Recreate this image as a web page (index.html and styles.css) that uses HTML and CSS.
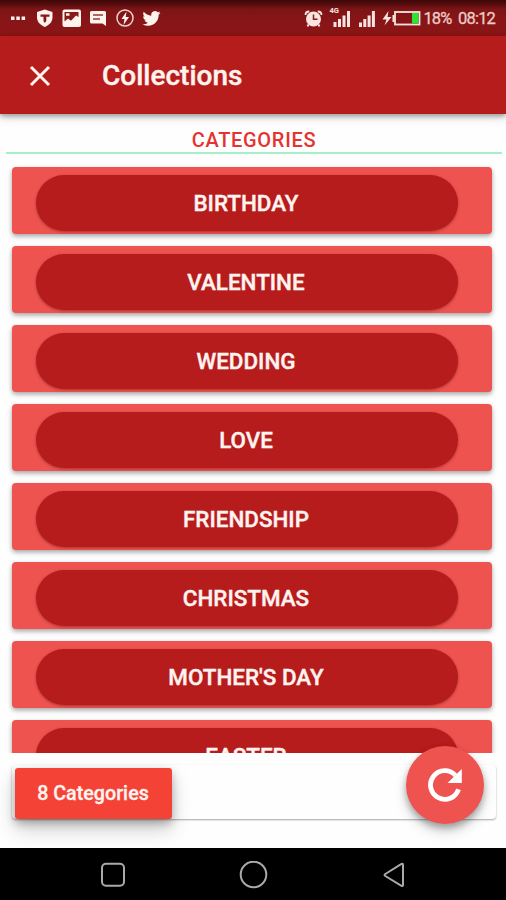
FILE: index.html
```html
<!DOCTYPE html>
<html lang="en">
<head>
<meta charset="utf-8">
<title>Collections</title>
<link rel="stylesheet" href="styles.css">
</head>
<body>
<div class="screen">
  <header class="status">
    <svg class="status-left" width="170" height="36" viewBox="0 0 170 36" fill="#fff3ee">
      <path d="M11 16.500h3.500v3.500H11zM16.300 16.500h3.500v3.500h-3.500zM21.600 16.500h3.500v3.500h-3.500z"/>
      <path d="M44.800 9.500 52.500 12v5.500c0 4.500-3.500 7.500-7.700 9.500-4.300-2-7.800-5-7.800-9.500V12z"/>
      <path d="M40.500 14.500h9v2.300h-3.200V21l-1.500 2-1.300-2v-4.200h-3z" fill="#86191a"/>
      <rect x="62.500" y="9.500" width="18.500" height="17.500" rx="2"/>
      <path d="M64.500 12h14v5l-2.500-1.500-5 5.300-3-2.300-3.500 3zM66 13.300v2.400h3.500v-2.400z" fill="#86191a" fill-rule="evenodd"/>
      <path d="M91.500 11h13q1.500 0 1.500 1.500V26l-3.500-2.500h-11q-1.500 0-1.500-1.500v-9.500q0-1.500 1.500-1.500z"/>
      <path d="M93 15h10M93 19h7" stroke="#9c3938" stroke-width="1.500"/>
      <circle cx="125" cy="18" r="8" fill="none" stroke="#eed4cf" stroke-width="1.500"/>
      <path d="M126.500 11.500 121.500 19h3l-1 6 5.500-8h-3.300z"/>
      <path transform="translate(142.500 9.500) scale(.75)" d="M23.950 4.570a10 10 0 0 1-2.820.77 4.960 4.960 0 0 0 2.160-2.720c-.95.550-2 .95-3.130 1.180a4.920 4.920 0 0 0-8.380 4.480C7.690 8.090 4.070 6.130 1.640 3.160a4.820 4.820 0 0 0-.67 2.480c0 1.710.870 3.210 2.190 4.100a4.900 4.900 0 0 1-2.230-.62v.06a4.920 4.920 0 0 0 3.950 4.830 5 5 0 0 1-2.210.08 4.940 4.940 0 0 0 4.600 3.420A9.870 9.870 0 0 1 0 19.540a13.990 13.990 0 0 0 7.550 2.210c9.050 0 14-7.500 14-13.980 0-.21 0-.42-.02-.63a9.940 9.940 0 0 0 2.420-2.570z"/>
    </svg>
    <div class="status-right">
      <svg width="120" height="36" viewBox="302 0 120 36" fill="#f8e5e1">
        <circle cx="313.500" cy="19" r="7.500"/>
        <path d="M305.500 15c0-2 1.500-3.500 3.800-3.500M321.500 15c0-2-1.500-3.500-3.800-3.500M308.500 24.500l-1 2M318.500 24.500l1 2" fill="none" stroke="#f8e5e1" stroke-width="1.800"/>
        <path d="M313.500 14.500v4.800h4" fill="none" stroke="#86191a" stroke-width="1.500"/>
        <text class="network" x="329.500" y="13.200">4G</text>
        <path d="M333.500 22h3v5h-3zM338 19h3v8h-3zM342.500 15.500h3V27h-3zM347 11h3v16h-3zM359 22.500h3V27h-3zM363.300 19h3v8h-3zM367.600 15.500h3V27h-3zM371.900 11h3v16h-3z"/>
        <path d="M388.500 11 382.500 19.500h4L384.500 25.500l7-8.500h-4z"/>
        <rect x="395" y="12" width="24.500" height="12.500" fill="none" stroke="#f8e5e1" stroke-width="1.800"/>
        <path d="M392.500 15h1.800v7h-1.800z"/>
        <path d="M412 13h6.500v10.500H412z" fill="#2fe42f"/>
      </svg>
      <span class="battery">18%</span>
      <time>08:12</time>
    </div>
  </header>

  <div class="appbar">
    <svg class="close" width="22" height="22" viewBox="0 0 22 22"><path d="M2 2l18 18M20 2 2 20"/></svg>
    <h1>Collections</h1>
  </div>

  <h2 class="heading">CATEGORIES</h2>

  <main class="list">
    <div class="card"><button class="pill">BIRTHDAY</button></div>
    <div class="card"><button class="pill">VALENTINE</button></div>
    <div class="card"><button class="pill">WEDDING</button></div>
    <div class="card"><button class="pill">LOVE</button></div>
    <div class="card"><button class="pill">FRIENDSHIP</button></div>
    <div class="card"><button class="pill">CHRISTMAS</button></div>
    <div class="card"><button class="pill">MOTHER'S DAY</button></div>
    <div class="card"><button class="pill">EASTER</button></div>
  </main>

  <div class="bottom">
    <div class="summary"><button class="count">8 Categories</button></div>
    <button class="fab" aria-label="Refresh">
      <svg width="36" height="36" viewBox="0 0 36 36"><path d="M31.500 22.200A14.300 14.300 0 1 1 28.500 8.500" fill="none" stroke="#fff" stroke-width="4.800"/><path d="M34.800 2V16H20.500z" fill="#fff"/></svg>
    </button>
  </div>

  <nav class="nav">
    <svg width="26" height="28" viewBox="0 0 26 28"><rect x="2" y="2.800" width="22" height="22" rx="4"/></svg>
    <svg width="30" height="28" viewBox="0 0 30 28"><circle cx="14.500" cy="13.500" r="12.800"/></svg>
    <svg width="24" height="28" viewBox="0 0 24 28"><path d="M21 4v20q0 1.500-1.500.8L3.300 15q-1.500-1 0-2L19.500 3q1.500-.7 1.500 1z"/></svg>
  </nav>
</div>
</body>
</html>
```
FILE: styles.css
```css
* { box-sizing: border-box; }

body {
  margin: 0;
  font-family: Roboto, "Liberation Sans", sans-serif;
  font-weight: 500;
  background: #fefefe;
}

button {
  border: 0;
  padding: 0;
  font: inherit;
  color: #fff3f0;
}

svg { display: block; flex: none; }

.screen {
  display: flex;
  flex-direction: column;
  width: 506px;
  height: 900px;
  overflow: hidden;
}

.status {
  display: flex;
  justify-content: space-between;
  flex: none;
  height: 36px;
  background: linear-gradient(#3f0708 0, #4c0a0b 3px, #7c1415 9px, #861517 18px, #8c1517);
}

.status-right {
  display: flex;
  align-items: center;
  padding-right: 10px;
  color: #edcbc6;
  font-size: 16.500px;
  font-weight: 400;
  -webkit-text-stroke: 0.300px;
}

.battery { width: 36px; padding-left: 1.500px; letter-spacing: -0.900px; }

.status time { width: 38px; letter-spacing: -0.800px; white-space: nowrap; }

.network { font-size: 7.500px; font-weight: 700; }

.appbar {
  position: relative;
  display: flex;
  align-items: center;
  flex: none;
  height: 78px;
  padding: 1px 0 0 29px;
  background: #b71c1c;
  box-shadow: 0 2px 5px rgba(0, 0, 0, 0.35), 0 4px 10px rgba(0, 0, 0, 0.12);
}

.close { fill: none; stroke: #fff3ee; stroke-width: 3; }

.appbar h1 {
  margin: 0 0 0 51px;
  color: #fff3ee;
  font-size: 28px;
  font-weight: 500;
  -webkit-text-stroke: 0.400px;
}

.heading {
  flex: none;
  height: 40px;
  margin: 0 4px 0 6px;
  padding-top: 12px;
  border-bottom: 2px solid #a5f0c8;
  color: #e53330;
  font-size: 20px;
  font-weight: 500;
  letter-spacing: 0.700px;
  line-height: 28px;
  text-align: center;
}

.list {
  display: flex;
  flex-direction: column;
  gap: 12px;
  flex: none;
  height: 599px;
  padding: 13px 14px 0 12px;
  overflow: hidden;
}

.card {
  flex: none;
  height: 67px;
  padding: 8px 34px 0 24px;
  border-radius: 4px;
  background: #ef5350;
  box-shadow: 0 2px 4px rgba(0, 0, 0, 0.28), 0 3px 6px rgba(0, 0, 0, 0.1);
}

.pill {
  display: block;
  width: 100%;
  height: 56px;
  padding-right: 2px;
  border-radius: 28px;
  background: #b71c1c;
  box-shadow: 0 1px 3px rgba(60, 0, 0, 0.4);
  font-size: 22.400px;
  -webkit-text-stroke: 0.400px;
}

.bottom {
  position: relative;
  flex: none;
  height: 95px;
  padding: 12px 10px 0 12px;
}

.summary {
  height: 54px;
  padding: 2.500px;
  border-radius: 4px;
  background: #fefefe;
  box-shadow: 0 1px 2px rgba(0, 0, 0, 0.35);
}

.count {
  display: block;
  width: 157px;
  height: 51px;
  border-radius: 3px;
  background: #f44336;
  box-shadow: 0 4px 8px rgba(0, 0, 0, 0.25), 0 10px 20px rgba(0, 0, 0, 0.2);
  font-size: 19.700px;
  -webkit-text-stroke: 0.300px;
}

.fab {
  position: absolute;
  top: -7px;
  right: 22px;
  display: flex;
  align-items: center;
  justify-content: center;
  width: 78px;
  height: 78px;
  border-radius: 50%;
  background: #ef5350;
  box-shadow: 0 4px 7px rgba(0, 0, 0, 0.3), 0 8px 14px rgba(0, 0, 0, 0.14);
}

.nav {
  display: flex;
  align-items: center;
  justify-content: space-between;
  flex: none;
  height: 52px;
  padding: 1px 100px 0 100px;
  background: #000;
}

.nav svg { fill: none; stroke: #aaa; stroke-width: 2; }
```
